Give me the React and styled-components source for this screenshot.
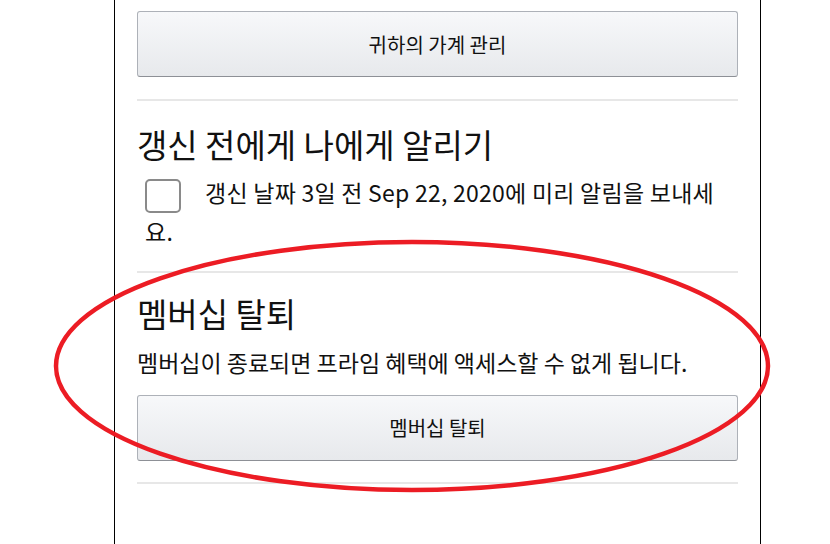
import styled, {createGlobalStyle} from 'styled-components';

const GlobalStyle = createGlobalStyle`
  html, body {
    margin: 0;
    padding: 0;
    background: #fff;
  }
  body {
    font-family: "Noto Sans CJK KR", "Noto Sans", sans-serif;
    color: #111;
  }
`;

export default function App() {
  return (
    <>
      <GlobalStyle />
      <Frame>
        <Section $first>
          <ActionButton>귀하의 가계 관리</ActionButton>
        </Section>
        <Section $top="23px" $bottom="22px">
          <Heading>갱신 전에게 나에게 알리기</Heading>
          <CheckLine>
            <CheckBox type="checkbox" aria-label="갱신 알림" />
            갱신 날짜 3일 전 Sep 22, 2020에 미리 알림을 보내세요.
          </CheckLine>
        </Section>
        <Section $top="20px" $bottom="21px">
          <Heading>멤버십 탈퇴</Heading>
          <Text>멤버십이 종료되면 프라임 혜택에 액세스할 수 없게 됩니다.</Text>
          <ActionButton $spaced>멤버십 탈퇴</ActionButton>
        </Section>
      </Frame>
      <Mark viewBox="0 0 830 544" aria-hidden="true">
        <ellipse cx="412" cy="366" rx="356" ry="124" fill="none" stroke="#ec1c24" strokeWidth="4.5" />
      </Mark>
    </>
  );
}

const Frame = styled.div`
  box-sizing: border-box;
  width: 647px;
  min-height: 100vh;
  margin-left: 114px;
  padding: 11px 22px 0;
  border-left: 1px solid #000;
  border-right: 1px solid #000;
`;

const Section = styled.section`
  padding: ${p => (p.$first ? '0 0 22px' : `${p.$top} 0 ${p.$bottom}`)};
  border-bottom: 2px solid #e7e7e7;
`;

const Heading = styled.h2`
  margin: 0;
  font-size: 33px;
  font-weight: 400;
  line-height: 40px;
  color: #111;
`;

const CheckLine = styled.p`
  margin: 10px 0 0;
  padding-left: 8px;
  font-size: 23px;
  line-height: 36px;
  letter-spacing: 0.25px;
`;

const CheckBox = styled.input`
  appearance: none;
  box-sizing: border-box;
  display: inline-block;
  width: 36px;
  height: 34px;
  margin: 0 24px 0 0;
  vertical-align: middle;
  border: 2px solid #8a8a8a;
  border-radius: 5px;
  background: #fff;
`;

const Text = styled.p`
  margin: 13px 0 0;
  font-size: 23px;
  line-height: 32px;
`;

const ActionButton = styled.button`
  display: block;
  box-sizing: border-box;
  width: 100%;
  height: 66px;
  margin-top: ${p => (p.$spaced ? '17px' : '0')};
  border: 1px solid #adb1b8;
  border-bottom-color: #8d9096;
  border-radius: 3px;
  background: linear-gradient(to bottom, #f7f8fa, #e7e9ec);
  font-family: "Noto Sans CJK KR", "Noto Sans", sans-serif;
  font-size: 20px;
  color: #111;
`;

const Mark = styled.svg`
  position: fixed;
  left: 0;
  top: 0;
  width: 830px;
  height: 544px;
  pointer-events: none;
`;
